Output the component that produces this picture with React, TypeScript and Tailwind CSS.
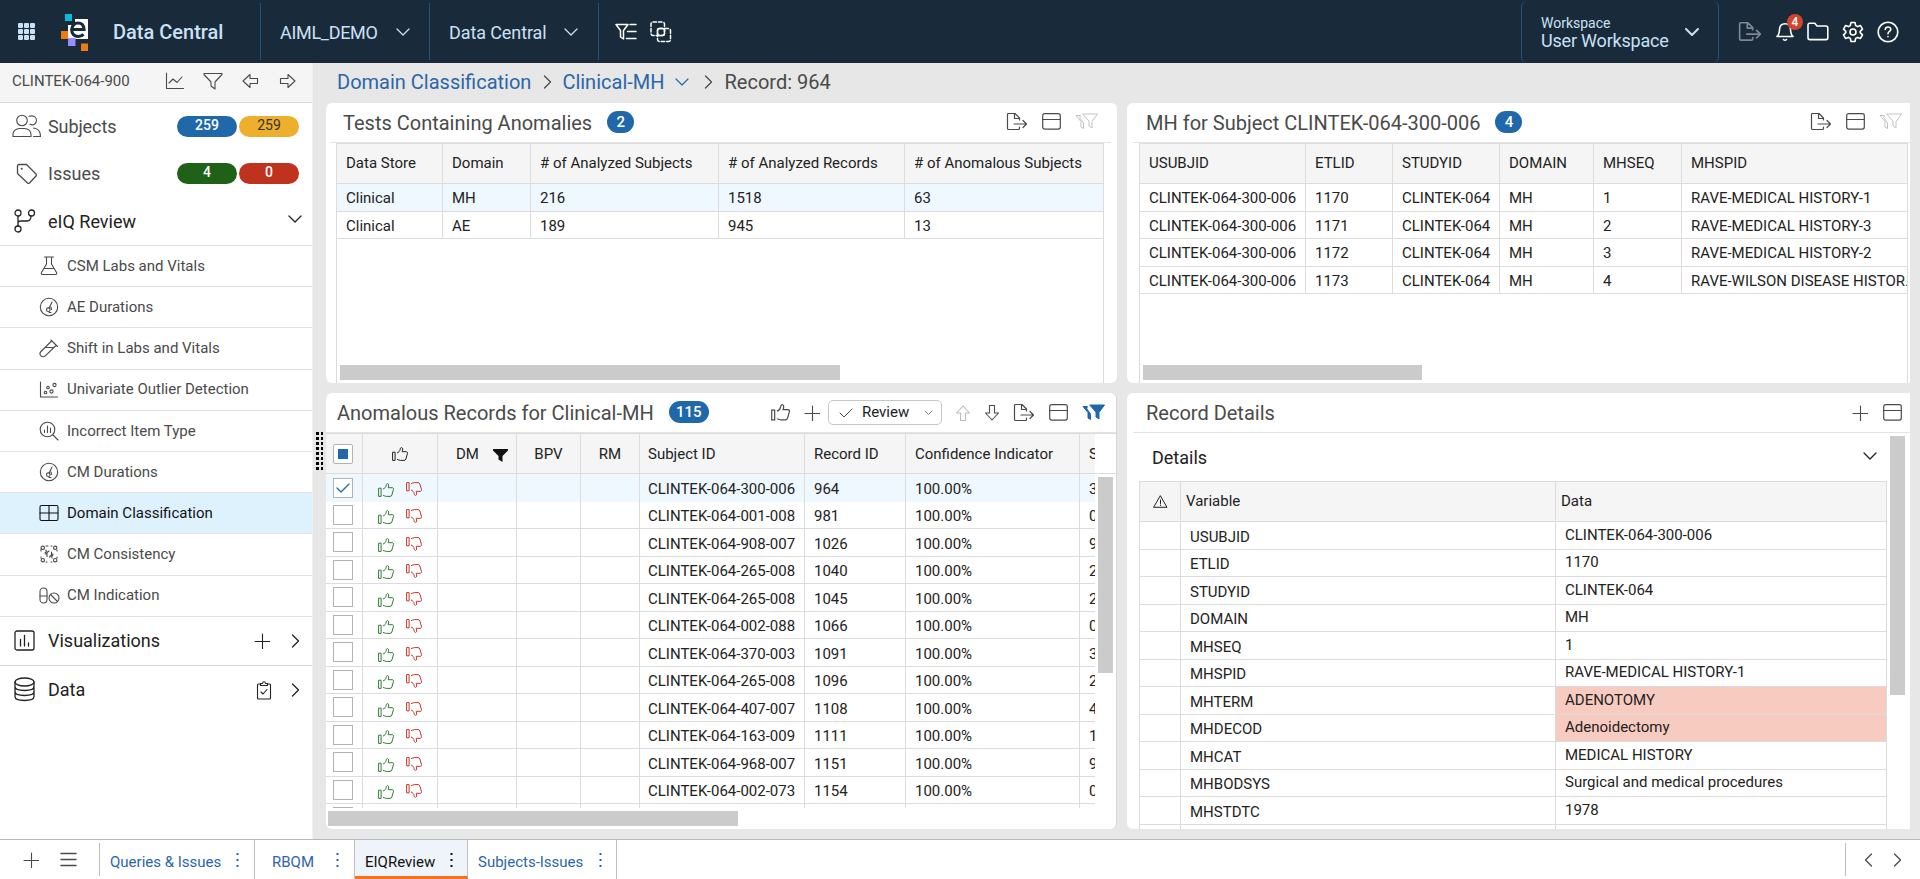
import type { ReactNode } from 'react';
import clsx from 'clsx';

type IconProps = { w?: number; h?: number; sw?: number; className?: string; children: ReactNode };

const Icon = ({ w = 20, h = 20, sw = 1.1, className, children }: IconProps) => (
  <svg
    width={w}
    height={h}
    viewBox={`0 0 ${w} ${h}`}
    fill="none"
    stroke="currentColor"
    strokeWidth={sw}
    strokeLinecap="round"
    strokeLinejoin="round"
    className={clsx('shrink-0', className)}
  >
    {children}
  </svg>
);

type P = { className?: string };

const ChevronDown = ({ className, sw = 1.3 }: P & { sw?: number }) => (
  <Icon w={14} h={8} sw={sw} className={className}>
    <path d="M1 1l6 6 6-6" />
  </Icon>
);
const ChevronRight = ({ className }: P) => (
  <Icon w={9} h={14} sw={1.3} className={className}>
    <path d="M1.5 1l6 6-6 6" />
  </Icon>
);
const Plus = ({ className }: P) => (
  <Icon w={16} h={16} className={className}>
    <path d="M8.5 1v15M1 8.5h15" />
  </Icon>
);
const ArrowShape = ({ className }: P) => (
  <Icon w={18} h={16} className={className}>
    <path d="M1.5 5.5H9V1.5L16 8l-7 6.5V10.5H1.5z" />
  </Icon>
);
const Thumb = ({ className, size = 16 }: P & { size?: number }) => (
  <svg width={size} height={size * 0.875} viewBox="0 0 16 14" fill="none" stroke="currentColor" strokeWidth="1" className={clsx('shrink-0', className)}>
    <path d="M.6 5.2h2.5v8.2H.6zM5 6c1.7-.5 2.9-1.9 3.2-3.8.1-1.2.7-1.7 1.4-1.6 1.2.2 1.4 1.7.6 4.1h4c1.3 0 1.6 1.1 1.2 2l-1.5 5.3c-.3.9-.9 1.4-1.9 1.4H8.4c-1.4 0-2-.9-3.4-1" />
  </svg>
);
const ExportIcon = ({ className, sw = 1.2 }: P & { sw?: number }) => (
  <Icon w={22} h={20} sw={sw} className={className}>
    <path d="M13.5 8V6L9 1.5H2.5a1 1 0 0 0-1 1v14a1 1 0 0 0 1 1h10a1 1 0 0 0 1-1V15M8.5 1.8V6.5h5M8 12h12.5M17 8.5l3.5 3.5-3.5 3.5" />
  </Icon>
);
const WindowIcon = ({ className }: P) => (
  <Icon w={19} h={17} sw={1.2} className={className}>
    <rect x=".7" y=".7" width="17.6" height="15.4" rx="2" />
    <path d="M1 6.5h17" />
  </Icon>
);
const Funnels = ({ className, solid }: P & { solid?: boolean }) => (
  <Icon w={24} h={17} sw={1} className={className}>
    <g fill={solid ? 'currentColor' : 'none'}>
      <path d="M5 2.5H1l5 6v5.5l2.5 1.5V10L5 5z" />
      <path d="M8 1h14.5l-5.5 7.5V15l-3-2V8.5z" />
    </g>
  </Icon>
);
const Flask = () => (
  <Icon w={18} h={20}>
    <path d="M4.5 1h9M6.5 1v7l-5 8.5q-.8 2 1 2h13q1.8 0 1-2l-5-8.5V1M4 12.5h10" />
  </Icon>
);
const Gauge = () => (
  <Icon w={20} h={20}>
    <circle cx="10" cy="10" r="8.7" />
    <circle cx="9.3" cy="12.7" r="1.8" />
    <path d="M10.2 11l2.8-6M12 10l.5 2.5M10 15.5h2" />
  </Icon>
);
const TestTube = () => (
  <Icon w={20} h={20}>
    <path d="M12.5 3L2 13.5a3 3 0 0 0 4.3 4.3L17 7.5M7 9.5h7.500M12 2l6.5 6.5" />
  </Icon>
);
const Scatter = () => (
  <Icon w={20} h={18}>
    <path d="M1.5 1v15h17" />
    <circle cx="6.5" cy="11.500" r="1.300" />
    <circle cx="9" cy="6.500" r="1.300" />
    <circle cx="12.500" cy="10.500" r="1.600" />
    <circle cx="15.500" cy="4" r="1.600" />
  </Icon>
);
const SearchChart = () => (
  <Icon w={20} h={20}>
    <circle cx="8.5" cy="8.5" r="7.3" />
    <path d="M14 14l5 5M5.5 9v2.5M8.5 5v6.5M11.5 7v4.5" />
  </Icon>
);
const GridIcon = () => (
  <Icon w={20} h={18}>
    <rect x="1" y="1.5" width="18" height="15" rx="1.5" />
    <path d="M10 1.5v15M1 9h18" />
  </Icon>
);
const Consistency = () => (
  <Icon w={18} h={18}>
    <path d="M1 6V4M6 1h2M12 1h-1M17 6V5M1 12v1M6 17h1M12 17h-1M17 12v1M6 5q1 2-1 3M12 13q-1-2 1-3" />
    <circle cx="2.8" cy="2.8" r="1.7" />
    <circle cx="15.2" cy="2.8" r="1.7" />
    <circle cx="2.8" cy="15.2" r="1.7" />
    <circle cx="15.2" cy="15.2" r="1.7" />
    <path d="M9 6L7 7.5v4M7 8l-1.5 1M9.5 12L11.5 10V7M11.5 10l1.5-1" />
  </Icon>
);
const Pills = () => (
  <Icon w={21} h={18}>
    <rect x="1" y="1" width="7" height="15" rx="3.5" />
    <path d="M1 9h7" />
    <circle cx="15" cy="11" r="5" />
    <path d="M11.5 7.5l7 7" />
  </Icon>
);

const navItems = [
  { label: 'CSM Labs and Vitals', icon: <Flask /> },
  { label: 'AE Durations', icon: <Gauge /> },
  { label: 'Shift in Labs and Vitals', icon: <TestTube /> },
  { label: 'Univariate Outlier Detection', icon: <Scatter /> },
  { label: 'Incorrect Item Type', icon: <SearchChart /> },
  { label: 'CM Durations', icon: <Gauge /> },
  { label: 'Domain Classification', icon: <GridIcon />, active: true },
  { label: 'CM Consistency', icon: <Consistency /> },
  { label: 'CM Indication', icon: <Pills /> },
];

const Header = () => (
  <header className="flex h-[63px] shrink-0 items-center bg-[#192b3a] text-[#c9e1f7]">
    <div className="flex h-[57px] w-[261px] items-center border-r border-[#23527a]">
      <div className="ml-[18px] grid grid-cols-3 gap-px">
        {Array.from({ length: 9 }, (_, i) => (
          <span key={i} className="h-[5px] w-[5px] rounded-[1px] bg-[#c9e1f7]" />
        ))}
      </div>
      <svg width="28" height="38" viewBox="0 0 28 38" className="mt-0.5 ml-[26px]">
        <path d="M4 0h7v7H4z" fill="#08bce0" />
        <path d="M14 5h13v20H7V11h7z" fill="#fff" />
        <path d="M0 17h7v8H0z" fill="#ee7a14" />
        <path d="M7 24h7.5v8H7z" fill="#9a8cff" />
        <path d="M20 29.5h7V37h-7z" fill="#ee7a14" />
        <path d="M10.5 15.5H23c0-4.2-2.5-6.5-6-6.5s-6.3 2.7-6.3 6.8c0 4 2.6 6.7 6.6 6.7 2.2 0 4-.8 5.2-2.2" fill="none" stroke="#192b3a" strokeWidth="3.2" />
      </svg>
      <span className="ml-[24px] pt-px text-[20px] font-medium">Data Central</span>
    </div>
    <div className="flex h-[57px] w-[169px] items-center border-r border-[#23527a] pl-[19px] text-[18px]">
      <span className="w-[116px] pt-px tracking-[-0.3px]">AIML_DEMO</span>
      <ChevronDown />
    </div>
    <div className="flex h-[57px] w-[169px] items-center border-r border-[#23527a] pl-[19px] text-[18px]">
      <span className="w-[115px] pt-px tracking-[-0.1px]">Data Central</span>
      <ChevronDown />
    </div>
    <div className="ml-[16px] flex items-center gap-[13px] text-white">
      <Icon w={22} h={18} sw={1.5}>
        <path d="M1 1.5h12l-4.5 6V16l-3-2V7.5zM15 1.5h6M12.5 8.5H21M11.5 15.5H21" />
      </Icon>
      <Icon w={22} h={22} sw={1.5}>
        <rect x="7.5" y="7.5" width="13" height="13" rx="2" strokeDasharray="3.5 2" />
        <rect x="1" y="1" width="13.5" height="13.5" rx="2" strokeDasharray="3.500 2" />
        <rect x="7.5" y="7.5" width="7" height="7" rx="2" />
      </Icon>
    </div>
    <div className="ml-auto flex h-[62px] w-[198px] items-center justify-between rounded-md border-x border-[#23527a] pr-[19px] pl-[19px]">
      <div className="flex flex-col">
        <span className="text-[14px] leading-[17px]">Workspace</span>
        <span className="text-[18px] leading-[17px] tracking-[-0.2px]">User Workspace</span>
      </div>
      <ChevronDown sw={2} />
    </div>
    <div className="ml-[19px] flex w-[182px] items-center text-white">
      <ExportIcon className="h-[22px] w-[24px] text-[#7c8892]" sw={1.5} />
      <div className="relative ml-[14px]">
        <Icon w={18} h={20} sw={1.6}>
          <path d="M1 14.5c2-1.500 2.300-3.500 2.500-7C3.700 4 5.800 1.800 9 1.800s5.300 2.200 5.500 5.700c.2 3.500.5 5.500 2.500 7zM7.500 17.500q1.500 1.600 3 0" />
        </Icon>
        <span className="absolute -top-[8px] left-[11px] flex h-4 w-4 items-center justify-center rounded-full bg-[#d0452b] text-[12px] font-medium">4</span>
      </div>
      <Icon w={22} h={19} sw={1.6} className="ml-[13px]">
        <path d="M1 3a1.8 1.8 0 0 1 1.8-1.8h5L10 4h9a1.8 1.8 0 0 1 1.8 1.8v10A1.8 1.8 0 0 1 19 17.6H2.8A1.8 1.8 0 0 1 1 15.8z" />
      </Icon>
      <Icon w={22} h={22} sw={1.6} className="ml-[13px]">
        <path d="M9 1.5h4l.7 3.1 1.8 1 3-1 2 3.5-2.3 2.2v1.4l2.3 2.2-2 3.5-3-1-1.8 1L13 20.5H9l-.7-3.1-1.8-1-3 1-2-3.5 2.3-2.2v-1.4L1.5 8.1l2-3.5 3 1 1.8-1z" />
        <circle cx="11" cy="11" r="3" />
      </Icon>
      <Icon w={22} h={22} sw={1.6} className="ml-[13px]">
        <circle cx="11" cy="11" r="9.8" />
        <path d="M8.3 8.5c.2-3.3 5.500-3.3 5.500-.1 0 2-2.800 2-2.800 4.300M11 15.500v.2" />
      </Icon>
    </div>
  </header>
);

const Pill = ({ value, className }: { value: number; className: string }) => (
  <span className={clsx('flex h-[21px] w-[60px] justify-center rounded-full text-[14px] leading-[19px]', className)}>{value}</span>
);

const Sidebar = () => (
  <aside className="flex w-[313px] shrink-0 flex-col border-r border-[#f3f3f3] bg-white text-[#4a4a4a]">
    <div className="flex h-[40px] shrink-0 items-center border-b border-[#dadada] bg-[#f5f5f5] pl-[12px] text-[15px]">
      <span className="w-[153px] pb-[2px]">CLINTEK-064-900</span>
      <div className="flex items-center pb-[3px]">
        <Icon w={20} h={18}>
          <path d="M1.5 1v15.5h17M4 11l4-4 4 3.5 5-5.5" />
        </Icon>
        <Icon w={20} h={18} className="ml-[18px]">
          <path d="M1 1.5h18v1L12 10v7l-4-3v-4L1 2.5z" />
        </Icon>
        <ArrowShape className="ml-[18px] rotate-180" />
        <ArrowShape className="ml-[20px]" />
      </div>
    </div>
    <div className="flex h-[46px] items-center pl-[12px] text-[18px]">
      <Icon w={30} h={24}>
        <circle cx="10" cy="6.5" r="5.3" />
        <path d="M1 22.5v-2c0-3.5 3-6 6.5-6h5c3.5 0 6.5 2.5 6.5 6v2zM17 2.3c4.5-1.5 7.5 1 7.5 4 0 3.5-3 5.5-6.5 4M21.5 14c4.5.5 7 3 7 8.5h-7" />
      </Icon>
      <span className="ml-[6px] w-[129px] tracking-[-0.1px]">Subjects</span>
      <div className="flex gap-[2px]">
        <Pill value={259} className="bg-[#1f68aa] font-medium text-white" />
        <Pill value={259} className="bg-[#eeb02c] text-[#333]" />
      </div>
    </div>
    <div className="mt-px flex h-[47px] items-center pl-[16px] text-[18px]">
      <Icon w={22} h={22} sw={1.3}>
        <path d="M1.5 3A1.5 1.5 0 0 1 3 1.5h7.5L20 11q.8 1 0 2l-6.5 7q-1 .8-2 0L1.5 10.5z" />
        <path d="M5.5 5.500h.5v.5h-.5z" />
      </Icon>
      <span className="ml-[10px] w-[129px]">Issues</span>
      <div className="flex gap-[2px]">
        <Pill value={4} className="bg-[#1f6217] font-medium text-white" />
        <Pill value={0} className="bg-[#be321e] font-medium text-white" />
      </div>
    </div>
    <div className="flex h-[49px] items-center border-b border-[#e2e2e2] pl-[13px] text-[18px] text-[#222]">
      <Icon w={24} h={24} sw={1.3}>
        <circle cx="5" cy="4" r="3" />
        <circle cx="18.5" cy="4" r="3" />
        <circle cx="5" cy="20" r="3" />
        <path d="M5 7v10M5 13.5q.5-1.5 3-1.5h6q4 0 4-5" />
      </Icon>
      <span className="ml-[11px] w-[240px]">eIQ Review</span>
      <ChevronDown className="-mt-1" />
    </div>
    {navItems.map(item => (
      <div
        key={item.label}
        className={clsx(
          'flex h-[41.2px] shrink-0 items-center border-b border-[#e2e2e2] pl-[38px] text-[15px]',
          item.active && 'bg-[#def2fe] text-[#111]',
        )}
      >
        <span className="flex w-[22px] justify-center">{item.icon}</span>
        <span className="ml-[7px]">{item.label}</span>
      </div>
    ))}
    <div className="flex h-[49px] shrink-0 items-center border-b border-[#d4d4d4] pl-[14px] text-[18px] text-[#222]">
      <Icon w={21} h={21} sw={1.3}>
        <rect x="1" y="1" width="19" height="19" rx="2" />
        <path d="M6.5 9.5V16M10.5 5.5V16M14.5 13v3" />
      </Icon>
      <span className="ml-[13px] w-[206px]">Visualizations</span>
      <Plus />
      <ChevronRight className="ml-[21px]" />
    </div>
    <div className="flex h-[48px] items-center pl-[14px] text-[18px] text-[#222]">
      <Icon w={21} h={25} sw={1.3}>
        <ellipse cx="10.5" cy="5" rx="9.5" ry="4" />
        <path d="M1 5v14.5c0 5.3 19 5.3 19 0V5M1 9.5c0 5.3 19 5.3 19 0M1 14.5c0 5.3 19 5.3 19 0" />
      </Icon>
      <span className="ml-[13px] w-[208px]">Data</span>
      <Icon w={16} h={20}>
        <path d="M4.5 4H2.5a1 1 0 0 0-1 1v13a1 1 0 0 0 1 1h11a1 1 0 0 0 1-1V5a1 1 0 0 0-1-1h-2M4.5 5.5v-2h2c.3-2.3 2.7-2.3 3 0h2v2zM5 12l2 2 4-4.5" />
      </Icon>
      <ChevronRight className="ml-[19px]" />
    </div>
  </aside>
);

const Badge = ({ children, className }: { children: ReactNode; className?: string }) => (
  <span className={clsx('-mt-px flex h-[22px] items-center justify-center rounded-full bg-[#1f68aa] text-[15px] font-medium text-white', className)}>
    {children}
  </span>
);

const cell = 'flex shrink-0 items-center overflow-hidden border-r border-[#dcdcdc] whitespace-nowrap';

type GridProps = { widths: string[]; head: string[]; rows: string[][]; selected?: number };

const DataGrid = ({ widths, head, rows, selected }: GridProps) => (
  <div className="text-[15px] text-[#222]">
    <div className="flex h-[41px] border-y border-[#dcdcdc] bg-[#f5f5f5]">
      {head.map((h, i) => (
        <div key={h} className={clsx(cell, widths[i], 'pl-[9px]')}>{h}</div>
      ))}
    </div>
    {rows.map((row, r) => (
      <div key={r} className={clsx('flex h-[27.5px] border-b border-[#dcdcdc]', r === selected && 'bg-[#eff8fe]')}>
        {row.map((v, i) => (
          <div key={i} className={clsx(cell, widths[i], 'pt-[2px] pl-[9px]')}>{v}</div>
        ))}
      </div>
    ))}
  </div>
);

const GridActions = () => (
  <div className="ml-auto flex items-center gap-[14px] pb-[2px]">
    <ExportIcon />
    <WindowIcon />
    <Funnels className="text-[#c2c2c2]" />
  </div>
);

const TestsPanel = () => (
  <section className="flex h-[280px] w-[791px] flex-col overflow-hidden rounded-md bg-white">
    <div className="mr-[6px] ml-[4px] flex h-[40px] shrink-0 items-center border-b border-[#e4e4e4] pr-[12px] pl-[13px] text-[#4a4a4a]">
      <h2 className="text-[20px]">Tests Containing Anomalies</h2>
      <Badge className="ml-[15px] w-[27px]">2</Badge>
      <GridActions />
    </div>
    <div className="ml-[10px] flex w-[768px] flex-1 flex-col border-l border-[#dcdcdc]">
      <div className="flex flex-1 flex-col border-r border-[#dcdcdc]">
        <div className="-mr-px">
          <DataGrid
            widths={['w-[106px]', 'w-[88px]', 'w-[188px]', 'w-[186px]', 'w-[199px]']}
            head={['Data Store', 'Domain', '# of Analyzed Subjects', '# of Analyzed Records', '# of Anomalous Subjects']}
            rows={[
              ['Clinical', 'MH', '216', '1518', '63'],
              ['Clinical', 'AE', '189', '945', '13'],
            ]}
            selected={0}
          />
        </div>
        <div className="mt-auto mb-[3px] ml-[3px] h-[15px] w-[500px] bg-[#cbcbcb]" />
      </div>
    </div>
  </section>
);

const SubjectPanel = () => (
  <section className="flex h-[280px] w-[783px] flex-col overflow-hidden rounded-l-md bg-white">
    <div className="ml-[6px] flex h-[40px] shrink-0 items-center border-b border-[#e4e4e4] pr-[7px] pl-[13px] text-[#4a4a4a]">
      <h2 className="text-[20px]">MH for Subject CLINTEK-064-300-006</h2>
      <Badge className="ml-[15px] w-[27px]">4</Badge>
      <GridActions />
    </div>
    <div className="ml-[12px] flex w-[769px] flex-1 flex-col border-l border-[#dcdcdc]">
      <div className="flex flex-1 flex-col border-r border-[#dcdcdc]">
        <div className="-mr-px">
          <DataGrid
            widths={['w-[166px]', 'w-[87px]', 'w-[107px]', 'w-[94px]', 'w-[88px]', 'w-[226px]']}
            head={['USUBJID', 'ETLID', 'STUDYID', 'DOMAIN', 'MHSEQ', 'MHSPID']}
            rows={[
              ['CLINTEK-064-300-006', '1170', 'CLINTEK-064', 'MH', '1', 'RAVE-MEDICAL HISTORY-1'],
              ['CLINTEK-064-300-006', '1171', 'CLINTEK-064', 'MH', '2', 'RAVE-MEDICAL HISTORY-3'],
              ['CLINTEK-064-300-006', '1172', 'CLINTEK-064', 'MH', '3', 'RAVE-MEDICAL HISTORY-2'],
              ['CLINTEK-064-300-006', '1173', 'CLINTEK-064', 'MH', '4', 'RAVE-WILSON DISEASE HISTOR.'],
            ]}
          />
        </div>
        <div className="mt-auto mb-[3px] ml-[3px] h-[15px] w-[279px] bg-[#cbcbcb]" />
      </div>
    </div>
  </section>
);

const anomalies = [
  ['CLINTEK-064-300-006', '964', '3'],
  ['CLINTEK-064-001-008', '981', '0'],
  ['CLINTEK-064-908-007', '1026', '9'],
  ['CLINTEK-064-265-008', '1040', '2'],
  ['CLINTEK-064-265-008', '1045', '2'],
  ['CLINTEK-064-002-088', '1066', '0'],
  ['CLINTEK-064-370-003', '1091', '3'],
  ['CLINTEK-064-265-008', '1096', '2'],
  ['CLINTEK-064-407-007', '1108', '4'],
  ['CLINTEK-064-163-009', '1111', '1'],
  ['CLINTEK-064-968-007', '1151', '9'],
  ['CLINTEK-064-002-073', '1154', '0'],
  ['', '', ''],
];

const AnomalousPanel = () => (
  <section className="flex h-[436px] w-[791px] flex-col overflow-hidden rounded-md border-r border-[#d6d6d6] bg-white">
    <div className="flex h-[40px] shrink-0 items-center border-b border-[#e4e4e4] pr-[10px] pl-[11px] text-[#4a4a4a]">
      <h2 className="text-[20px]">Anomalous Records for Clinical-MH</h2>
      <Badge className="ml-[15px] w-[40px]">115</Badge>
      <div className="ml-auto flex items-center">
        <Thumb size={19} />
        <Plus className="ml-[14px]" />
        <div className="ml-[8px] flex h-[25px] w-[114px] items-center rounded-[5px] border border-[#c6c6c6] pl-[10px] text-[15px] text-[#222]">
          <Icon w={14} h={10} sw={1} className="text-[#4a4a4a]">
            <path d="M1 5l4 4 8-8" />
          </Icon>
          <span className="ml-[9px] w-[62px]">Review</span>
          <Icon w={9} h={6} sw={1} className="text-[#888]">
            <path d="M1 1l3.5 3.5L8 1" />
          </Icon>
        </div>
        <ArrowShape className="ml-[12px] -rotate-90 text-[#bdbdbd]" />
        <ArrowShape className="ml-[11px] rotate-90" />
        <ExportIcon className="ml-[12px]" />
        <WindowIcon className="ml-[14px]" />
        <Funnels className="ml-[14px] text-[#1f68aa]" solid />
      </div>
    </div>
    <div className="flex shrink-0 flex-col border-t border-[#dcdcdc] text-[15px] text-[#222]">
      <div className="flex h-[40px] border-b border-[#dcdcdc]">
        <div className="flex w-[769px] overflow-hidden bg-[#f5f5f5]">
          <div className={clsx(cell, 'w-[37px] pl-[7px]')}>
            <span className="flex h-5 w-5 items-center justify-center rounded-[2px] border border-[#b3b3b3] bg-white">
              <span className="h-[10px] w-[10px] bg-[#1f68aa]" />
            </span>
          </div>
          <div className={clsx(cell, 'w-[75px] justify-center')}>
            <Thumb />
          </div>
          <div className={clsx(cell, 'w-[79px] pt-px pl-[18px]')}>
            DM
            <svg width="15" height="13" viewBox="0 0 15 13" className="mt-[3px] ml-[14px]">
              <path d="M0 0h15v1.5L9.5 7v6L5.5 10.5V7L0 1.5z" fill="#111" />
            </svg>
          </div>
          <div className={clsx(cell, 'w-[64px] justify-center pt-px')}>BPV</div>
          <div className={clsx(cell, 'w-[59px] justify-center pt-px')}>RM</div>
          <div className={clsx(cell, 'w-[165px] pt-px pl-[8px]')}>Subject ID</div>
          <div className={clsx(cell, 'w-[101px] pt-px pl-[9px]')}>Record ID</div>
          <div className={clsx(cell, 'w-[174px] pt-px pl-[9px]')}>Confidence Indicator</div>
          <div className="flex w-[15px] items-center overflow-hidden pt-px pl-[9px]">S</div>
        </div>
      </div>
      <div className="flex h-[334px]">
        <div className="w-[769px] overflow-hidden">
          {anomalies.map(([subject, record, score], r) => (
            <div key={r} className={clsx('flex h-[27.5px]', r === 0 ? 'bg-[#eff8fe]' : 'border-b border-[#dcdcdc]')}>
              <div className={clsx(cell, 'w-[37px] pl-[7px]')}>
                <span className="flex h-5 w-5 items-center justify-center border border-[#b3b3b3] bg-white">
                  {r === 0 && (
                    <Icon w={14} h={10} sw={1.3} className="text-[#1f68aa]">
                      <path d="M1 5l4 4 8-8" />
                    </Icon>
                  )}
                </span>
              </div>
              <div className={clsx(cell, 'w-[75px] gap-[12px] pt-[3px] pl-[15px]')}>
                <Thumb className="mt-[2px] text-[#2f7d32]" />
                <Thumb className="rotate-180 -scale-x-100 text-[#c0392b]" />
              </div>
              <div className={clsx(cell, 'w-[79px]')} />
              <div className={clsx(cell, 'w-[64px]')} />
              <div className={clsx(cell, 'w-[59px]')} />
              <div className={clsx(cell, 'w-[165px] pt-[3px] pl-[8px]')}>{subject}</div>
              <div className={clsx(cell, 'w-[101px] pt-[3px] pl-[9px]')}>{record}</div>
              <div className={clsx(cell, 'w-[174px] pt-[3px] pl-[9px]')}>{subject && '100.00%'}</div>
              <div className="flex w-[15px] items-center overflow-hidden pt-[3px] pl-[9px]">{score}</div>
            </div>
          ))}
        </div>
        <div className="mt-[3px] ml-[3px] h-[196px] w-[15px] bg-[#cbcbcb]" />
      </div>
    </div>
    <div className="mt-[3px] ml-[2px] h-[15px] w-[410px] shrink-0 bg-[#cbcbcb]" />
  </section>
);

const details = [
  ['USUBJID', 'CLINTEK-064-300-006'],
  ['ETLID', '1170'],
  ['STUDYID', 'CLINTEK-064'],
  ['DOMAIN', 'MH'],
  ['MHSEQ', '1'],
  ['MHSPID', 'RAVE-MEDICAL HISTORY-1'],
  ['MHTERM', 'ADENOTOMY'],
  ['MHDECOD', 'Adenoidectomy'],
  ['MHCAT', 'MEDICAL HISTORY'],
  ['MHBODSYS', 'Surgical and medical procedures'],
  ['MHSTDTC', '1978'],
  ['', ''],
];
const flagged = ['MHTERM', 'MHDECOD'];

const DetailsPanel = () => (
  <section className="flex h-[436px] w-[783px] flex-col overflow-hidden rounded-l-md bg-white">
    <div className="ml-[6px] flex h-[40px] shrink-0 items-center border-b border-[#e4e4e4] pr-[8px] pl-[13px] text-[#4a4a4a]">
      <h2 className="text-[20px]">Record Details</h2>
      <Plus className="ml-auto" />
      <WindowIcon className="ml-[15px]" />
    </div>
    <div className="flex">
      <div className="ml-[12px] flex w-[748px] flex-col">
        <div className="flex h-[48px] items-center justify-between pr-[10px] pl-[13px] text-[18px] text-[#222]">
          <span>Details</span>
          <ChevronDown className="-mt-[3px]" />
        </div>
        <div className="border-l border-[#dcdcdc] text-[15px] text-[#222]">
          <div className="flex h-[41px] border-y border-[#dcdcdc] bg-[#f5f5f5]">
            <div className={clsx(cell, 'w-[41px] justify-center')}>
              <Icon w={15} h={13} sw={1}>
                <path d="M7.5 1L14 12.3H1zM7.5 5v3.5M7.5 10v.5" />
              </Icon>
            </div>
            <div className={clsx(cell, 'w-[375px] pl-[5px]')}>Variable</div>
            <div className={clsx(cell, 'w-[331px] pl-[5px]')}>Data</div>
          </div>
          {details.map(([name, value], r) => (
            <div key={r} className="flex h-[27.5px] border-b border-[#dcdcdc]">
              <div className={clsx(cell, 'w-[41px]')} />
              <div className={clsx(cell, 'w-[375px] pt-[3px] pl-[9px]')}>{name}</div>
              <div className={clsx(cell, 'w-[331px] pb-px pl-[9px]', flagged.includes(name) && 'bg-[#f8cbc0]')}>{value}</div>
            </div>
          ))}
        </div>
      </div>
      <div className="mt-[3px] ml-[3px] h-[259px] w-[15px] bg-[#cbcbcb]" />
    </div>
  </section>
);

const Dots = ({ className }: P) => (
  <svg width="3" height="14" viewBox="0 0 3 14" fill="currentColor" className={className}>
    <path d="M.5 0h2v2h-2zM.5 6h2v2h-2zM.5 12h2v2h-2z" />
  </svg>
);

const Tab = ({ label, className, text, active }: { label: string; className: string; text: string; active?: boolean }) => (
  <div
    className={clsx(
      'flex h-full items-center border-r border-[#bdbdbd]',
      className,
      active ? 'border-b-[3px] border-b-[#f47321] bg-[#eef4f9] pt-[3px] text-[#111]' : 'text-[#2b66a8]',
    )}
  >
    <span className={clsx('mt-[5px]', text)}>{label}</span>
    <Dots />
  </div>
);

const BottomBar = () => (
  <footer className="flex h-[40px] shrink-0 items-center border-t border-[#b8b8b8] bg-white text-[15px] text-[#4a4a4a]">
    <div className="flex h-[33px] w-[100px] items-center border-r border-[#bdbdbd] pl-[23px]">
      <Plus />
      <Icon w={17} h={15} sw={1.4} className="ml-[21px]">
        <path d="M1 1.5h15M1 7.5h15M1 13.5h15" />
      </Icon>
    </div>
    <Tab label="Queries & Issues" className="w-[155px] pl-[10px]" text="w-[126px]" />
    <Tab label="RBQM" className="w-[100px] pl-[17px]" text="w-[64px]" />
    <Tab label="EIQReview" className="w-[113px] pl-[10px]" text="w-[85px]" active />
    <Tab label="Subjects-Issues" className="w-[149px] pl-[10px]" text="w-[121px]" />
    <div className="ml-auto flex h-[33px] w-[75px] items-center border-l border-[#bdbdbd] pl-[18px]">
      <ChevronRight className="rotate-180" />
      <ChevronRight className="ml-[20px]" />
    </div>
  </footer>
);

const App = () => {
  return (
    <div className="flex h-[879px] w-[1920px] flex-col overflow-hidden bg-[#e7e7e7] font-['Roboto',sans-serif]">
      <Header />
      <div className="flex h-[776px]">
        <Sidebar />
        <div className="flex w-[13px] shrink-0 items-center justify-center">
          <div className="grid grid-cols-2 gap-x-[2px] gap-y-[2px]">
            {Array.from({ length: 16 }, (_, i) => (
              <span key={i} className="h-[3px] w-[2.5px] bg-black" />
            ))}
          </div>
        </div>
        <main className="flex flex-col">
          <nav className="flex h-[40px] items-center pb-[2px] pl-[11px] text-[20px] text-[#2b66a8]">
            <span>Domain Classification</span>
            <ChevronRight className="ml-[12px] text-[#4a4a4a]" />
            <span className="ml-[10px]">Clinical-MH</span>
            <ChevronDown className="ml-[10px]" sw={1.2} />
            <ChevronRight className="ml-[15px] text-[#4a4a4a]" />
            <span className="ml-[12px] text-[#4a4a4a]">Record: 964</span>
          </nav>
          <div className="grid grid-cols-[791px_783px] gap-[10px]">
            <TestsPanel />
            <SubjectPanel />
            <AnomalousPanel />
            <DetailsPanel />
          </div>
        </main>
      </div>
      <BottomBar />
    </div>
  );
};

export default App;
